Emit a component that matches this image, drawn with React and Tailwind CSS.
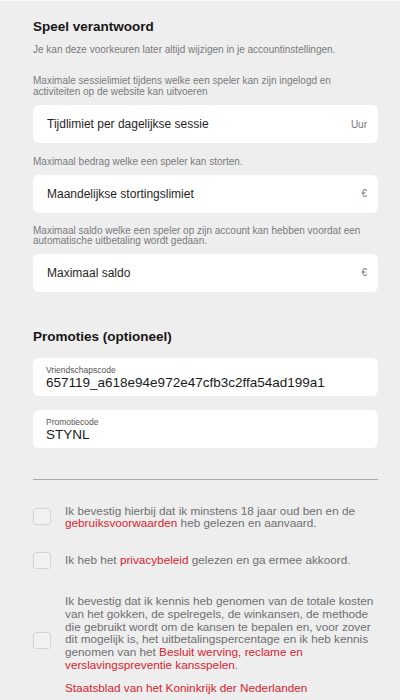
import { useState } from 'react';

const font = { fontFamily: '"Liberation Sans", Arial, sans-serif' };

function LimitField({ label, unit }) {
  return (
    <div className="flex h-[38px] items-center justify-between rounded-[6px] bg-white pl-[14px] pr-[11px]">
      <span className="text-[12px] text-[#1f1f1f]">{label}</span>
      <span className="text-[10px] text-[#777]">{unit}</span>
    </div>
  );
}

function CodeField({ label, value }) {
  return (
    <div className="h-[38px] rounded-[6px] bg-white px-[13px] pt-[7px]">
      <p className="text-[8.5px] leading-[10px] text-[#555]">{label}</p>
      <p className="text-[13.5px] leading-[16px] text-[#1a1a1a]">{value}</p>
    </div>
  );
}

function Checkbox({ checked, onChange, className = '' }) {
  return (
    <button
      type="button"
      onClick={onChange}
      className={`h-[17px] w-[18px] shrink-0 rounded-[3px] border border-[#d4d4d4] bg-[#f1f1f1] ${className}`}
      aria-pressed={checked}
    />
  );
}

export default function App() {
  const [checks, setChecks] = useState([false, false, false]);
  const toggle = i => setChecks(c => c.map((v, j) => (j === i ? !v : v)));

  return (
    <div className="min-h-[700px] border-t border-[#f8f8f8] bg-[#eeeeee] pl-[33px] pr-[22px]" style={font}>
      {/* Speel verantwoord */}
      <h2 className="pt-[17px] text-[13.5px] font-bold leading-[18px] text-[#161616]">Speel verantwoord</h2>
      <p className="mt-[8px] text-[10px] leading-[12px] text-[#7a7a7a]">
        Je kan deze voorkeuren later altijd wijzigen in je accountinstellingen.
      </p>

      <p className="mt-[20px] text-[10px] leading-[10.5px] text-[#7a7a7a]">
        Maximale sessielimiet tijdens welke een speler kan zijn ingelogd en activiteiten op de website kan uitvoeren
      </p>
      <div className="mt-[8px]">
        <LimitField label="Tijdlimiet per dagelijkse sessie" unit="Uur" />
      </div>

      <p className="mt-[14px] text-[10px] leading-[10.5px] text-[#7a7a7a]">
        Maximaal bedrag welke een speler kan storten.
      </p>
      <div className="mt-[7px]">
        <LimitField label="Maandelijkse stortingslimiet" unit="€" />
      </div>

      <p className="mt-[13px] text-[10px] leading-[10.5px] text-[#7a7a7a]">
        Maximaal saldo welke een speler op zijn account kan hebben voordat een automatische uitbetaling wordt gedaan.
      </p>
      <div className="mt-[7px]">
        <LimitField label="Maximaal saldo" unit="€" />
      </div>

      {/* Promoties */}
      <h2 className="mt-[36px] text-[13.5px] font-bold leading-[18px] text-[#161616]">Promoties (optioneel)</h2>
      <div className="mt-[12px] space-y-[14px]">
        <CodeField label="Vriendschapscode" value="657119_a618e94e972e47cfb3c2ffa54ad199a1" />
        <CodeField label="Promotiecode" value="STYNL" />
      </div>

      <div className="mt-[31px] h-px bg-[#a8a8a8]" />

      {/* Voorwaarden */}
      <div className="mt-[25px] flex items-center gap-[14px]">
        <Checkbox checked={checks[0]} onChange={() => toggle(0)} />
        <p className="text-[11.75px] leading-[12.3px] text-[#6e6e6e]">
          Ik bevestig hierbij dat ik minstens 18 jaar oud ben en de{' '}
          <a className="text-[#d9232e]">gebruiksvoorwaarden</a> heb gelezen en aanvaard.
        </p>
      </div>

      <div className="mt-[23px] flex items-center gap-[14px]">
        <Checkbox checked={checks[1]} onChange={() => toggle(1)} />
        <p className="text-[11.75px] leading-[12.8px] text-[#6e6e6e]">
          Ik heb het <a className="text-[#d9232e]">privacybeleid</a> gelezen en ga ermee akkoord.
        </p>
      </div>

      <div className="mt-[26px] flex items-start gap-[14px]">
        <Checkbox checked={checks[2]} onChange={() => toggle(2)} className="mt-[37px]" />
        <div>
          <p className="text-[11.75px] leading-[12.8px] text-[#6e6e6e]">
            Ik bevestig dat ik kennis heb genomen van de totale kosten van het gokken, de spelregels, de winkansen, de
            methode die gebruikt wordt om de kansen te bepalen en, voor zover dit mogelijk is, het
            uitbetalingspercentage en ik heb kennis genomen van het{' '}
            <a className="text-[#d9232e]">Besluit werving, reclame en verslavingspreventie kansspelen</a>.
          </p>
          <p className="mt-[10px] text-[11.75px] leading-[12.8px] text-[#d9232e]">
            Staatsblad van het Koninkrijk der Nederlanden
          </p>
        </div>
      </div>
    </div>
  );
}
